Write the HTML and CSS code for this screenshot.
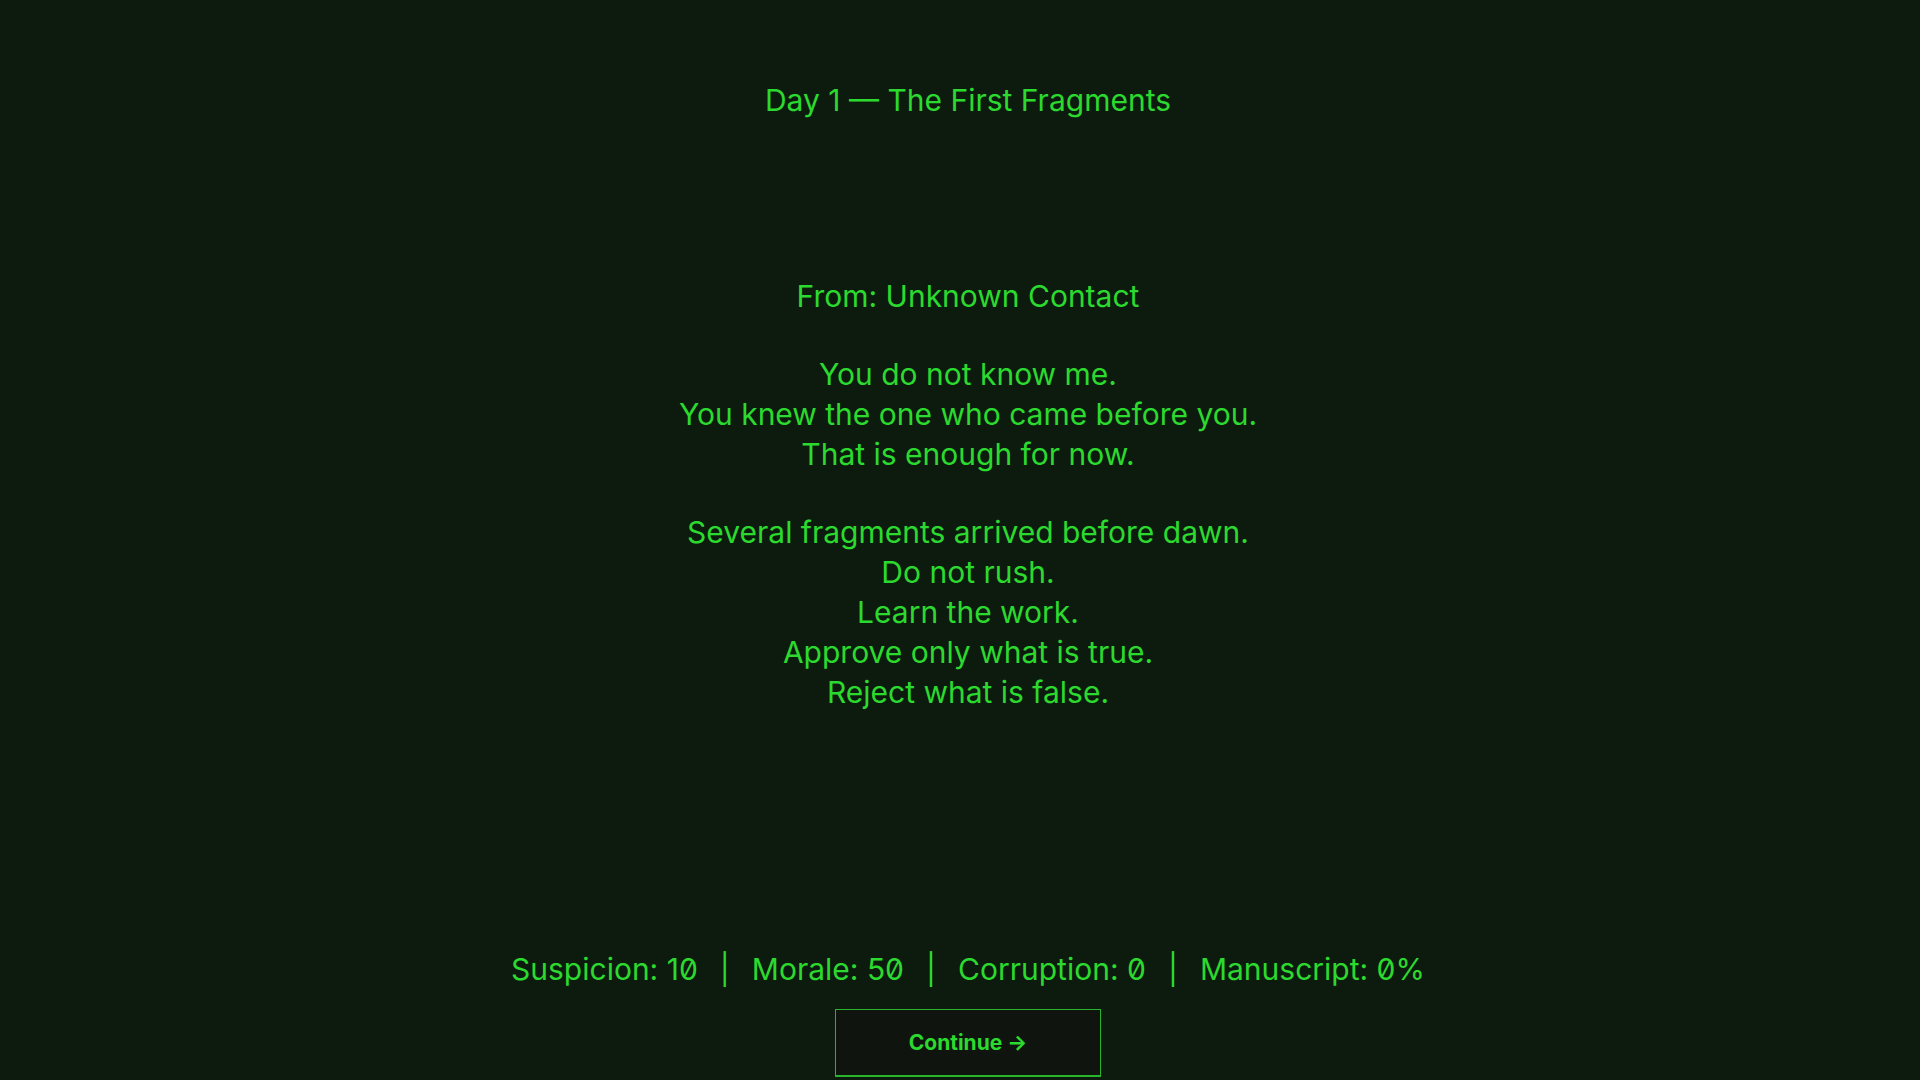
FILE: index.html
```
<!DOCTYPE html>
<html lang="en">
<head>
  <meta charset="UTF-8">
  <title>Day 1 — The First Fragments</title>
  <link rel="stylesheet" href="styles.css">
</head>
<body>
  <main class="screen">
    <h1 class="title">Day 1 — The First Fragments</h1>

    <!-- Incoming message -->
    <section class="message">
      <p>From: Unknown Contact</p>
      <p>
        You do not know me.<br>
        You knew the one who came before you.<br>
        That is enough for now.
      </p>
      <p>
        Several fragments arrived before dawn.<br>
        Do not rush.<br>
        Learn the work.<br>
        Approve only what is true.<br>
        Reject what is false.
      </p>
    </section>

    <!-- Player stats -->
    <div class="stats">
      <span>Suspicion: 10</span>
      <span>|</span>
      <span>Morale: 50</span>
      <span>|</span>
      <span>Corruption: 0</span>
      <span>|</span>
      <span>Manuscript: 0%</span>
    </div>

    <button class="continue" type="button">Continue →</button>
  </main>
</body>
</html>
```
FILE: styles.css
```
* {
  margin: 0;
  padding: 0;
  box-sizing: border-box;
}
body {
  font-family: Inter, "Liberation Sans", sans-serif;
  font-size: 30px;
  line-height: 40px;
  font-feature-settings: "zero";
  color: #2cd92e;
  background: #0d1b0e;
}
.screen {
  display: flex;
  flex-direction: column;
  align-items: center;
  min-height: 100vh;
  padding: 80px 0 3px 16px;
  text-align: center;
}
.title {
  font-size: 30px;
  font-weight: 400;
}
/* Message text */
.message {
  display: flex;
  flex-direction: column;
  gap: 38px;
  margin-top: 156px;
}
/* Stats line stays at the bottom, above the button */
.stats {
  display: flex;
  gap: 22px;
  margin-top: auto;
}
.continue {
  width: 266px;
  height: 68px;
  margin-top: 20px;
  font-family: inherit;
  font-size: 21px;
  font-weight: 700;
  color: #2cd92e;
  background: #0f150e;
  border: 1px solid #28b42b;
  border-bottom-width: 2px;
  cursor: pointer;
}
.continue:hover {
  background: #14240f;
}
```
